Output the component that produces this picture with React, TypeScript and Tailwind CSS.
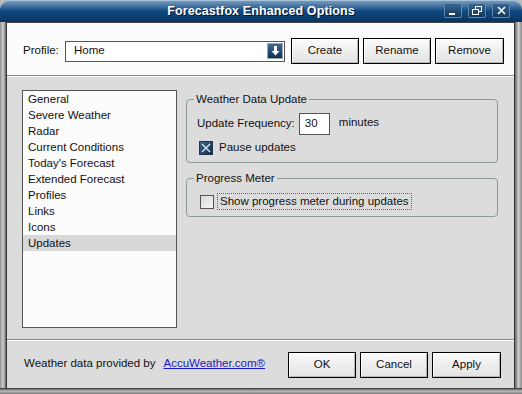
import React from 'react';

const font = { fontFamily: '"Liberation Sans", Arial, sans-serif' };

const items = [
  'General',
  'Severe Weather',
  'Radar',
  'Current Conditions',
  "Today's Forecast",
  'Extended Forecast',
  'Profiles',
  'Links',
  'Icons',
  'Updates',
];

const btn =
  'h-[26px] border border-black bg-gradient-to-b from-[#fbfbfb] to-[#e2e2e2] shadow-[inset_1px_1px_0_#ffffff,inset_-1px_-1px_0_#b5b5b5] text-[11.5px] text-[#111] flex items-center justify-center';

const TitleButton: React.FC<{ children: React.ReactNode }> = ({ children }) => (
  <div className="w-[18px] h-[15px] rounded-[2px] bg-gradient-to-b from-[#3b6a96] to-[#0d3358] shadow-[inset_0_0_0_1px_#5f89ad] flex items-center justify-center">
    {children}
  </div>
);

export default function App() {
  return (
    <div style={font} className="w-[522px] h-[394px] bg-[#b9b9b9] flex flex-col overflow-hidden whitespace-nowrap">
      {/* title bar */}
      <div className="h-[22px] bg-[#b9b9b9] flex">
        <div className="flex-1 rounded-t-[9px] bg-gradient-to-b from-[#7fa3c4] via-[#0e4a83] to-[#08345f] shadow-[inset_0_1px_0_#a9c3da] relative flex items-center justify-center">
          <span className="text-white font-bold text-[12.5px] tracking-[0.1px] [text-shadow:1px_1px_0_#021a33]">
            Forecastfox Enhanced Options
          </span>
          <div className="absolute right-[12px] top-[3px] flex gap-[6px]">
            <TitleButton>
              <div className="w-[6px] h-[2px] bg-white mt-[6px] -ml-[2px]" />
            </TitleButton>
            <TitleButton>
              <svg width="11" height="10" viewBox="0 0 11 10">
                <rect x="3.5" y="0.5" width="6" height="5" fill="none" stroke="white" />
                <rect x="0.5" y="3.5" width="6" height="5" fill="#1d4670" stroke="white" />
              </svg>
            </TitleButton>
            <TitleButton>
              <svg width="9" height="9" viewBox="0 0 9 9">
                <path d="M1 1L8 8M8 1L1 8" stroke="white" strokeWidth="1.6" />
              </svg>
            </TitleButton>
          </div>
        </div>
      </div>

      {/* body */}
      <div className="flex-1 flex">
        <div className="w-[7px] bg-gradient-to-r from-[#8f8f8f] via-[#d0d0d0] to-[#6a6a6a] border-r border-[#333]" />
        <div className="flex-1 flex flex-col bg-[#dcdcdc] text-[11.5px] text-[#111]">
          {/* profile row */}
          <div className="h-[54px] bg-[#fcfcfc] border-t border-[#444] border-b border-b-[#8a8a8a] flex items-center pl-[16px] pt-[4px]">
            <span className="w-[42px]">Profile:</span>
            <div className="w-[220px] h-[21px] border border-[#555] bg-white flex items-center justify-between pl-[8px] pr-[1px]">
              <span>Home</span>
              <div className="w-[16px] h-[16px] bg-gradient-to-b from-[#3e6b94] to-[#102f50] border border-[#9aa9b6] flex items-center justify-center">
                <svg width="9" height="10" viewBox="0 0 9 10">
                  <path d="M3 0h3v5h2.5L4.5 9.5 0.5 5H3z" fill="white" />
                </svg>
              </div>
            </div>
            <div className="flex gap-[4px] ml-[6px]">
              <div className={`${btn} w-[68px]`}>Create</div>
              <div className={`${btn} w-[68px]`}>Rename</div>
              <div className={`${btn} w-[69px]`}>Remove</div>
            </div>
          </div>

          {/* main area */}
          <div className="flex-1 flex pl-[15px] pt-[13px] border-t border-white">
            <div className="w-[155px] h-[238px] border border-[#555] bg-[#fcfcfc]">
              {items.map((it) => (
                <div
                  key={it}
                  className={`h-[16px] leading-[16px] pl-[5px] ${it === 'Updates' ? 'bg-[#d8d8d8]' : ''}`}
                >
                  {it}
                </div>
              ))}
            </div>

            <div className="w-[312px] ml-[9px] flex flex-col gap-[8px] pt-[2px]">
              <fieldset className="border border-[#8d989b] rounded-[4px] h-[71px] px-[7px]">
                <legend className="px-[2px] leading-[14px]">Weather Data Update</legend>
                <div className="flex items-center mt-[7px] ml-[3px]">
                  <span>Update Frequency:</span>
                  <div className="w-[31px] h-[22px] border border-[#555] bg-white ml-[4px] flex items-center pl-[5px]">
                    30
                  </div>
                  <span className="ml-[9px] -mt-[2px]">minutes</span>
                </div>
                <div className="flex items-center mt-[4px] ml-[5px]">
                  <div className="w-[14px] h-[14px] bg-gradient-to-br from-[#3b6791] to-[#0f2d4c] border border-[#1e3550] flex items-center justify-center">
                    <svg width="10" height="10" viewBox="0 0 10 10">
                      <path d="M1 1L9 9M9 1L1 9" stroke="#dfe9f2" strokeWidth="1.3" />
                    </svg>
                  </div>
                  <span className="ml-[6px]">Pause updates</span>
                </div>
              </fieldset>

              <fieldset className="border border-[#8d989b] rounded-[4px] h-[46px] px-[7px]">
                <legend className="px-[2px] leading-[14px]">Progress Meter</legend>
                <div className="flex items-center mt-[8px] ml-[6px]">
                  <div className="w-[14px] h-[14px] border border-[#555] bg-gradient-to-br from-[#d8d8d8] to-[#f6f6f6]" />
                  <span className="ml-[3px] px-[2px] border border-dotted border-[#666] leading-[15px]">
                    Show progress meter during updates
                  </span>
                </div>
              </fieldset>
            </div>
          </div>

          {/* footer */}
          <div className="h-[49px] border-t border-[#8a8a8a] shadow-[inset_0_1px_0_#ffffff] bg-[#dcdcdc] flex items-center pl-[17px]">
            <span className="shrink-0">Weather data provided by</span>
            <span className="shrink-0 text-[#1a1acc] underline ml-[8px]">AccuWeather.com®</span>
            <div className="flex gap-[4px] ml-auto mr-[13px] mt-[1px]">
              <div className={`${btn} w-[68px]`}>OK</div>
              <div className={`${btn} w-[68px]`}>Cancel</div>
              <div className={`${btn} w-[69px]`}>Apply</div>
            </div>
          </div>
        </div>
        <div className="w-[8px] bg-gradient-to-r from-[#6a6a6a] via-[#cfcfcf] to-[#8a8a8a] border-l border-[#333]" />
      </div>
      <div className="h-[6px] bg-gradient-to-b from-[#333] via-[#bdbdbd] to-[#7a7a7a]" />
    </div>
  );
}
